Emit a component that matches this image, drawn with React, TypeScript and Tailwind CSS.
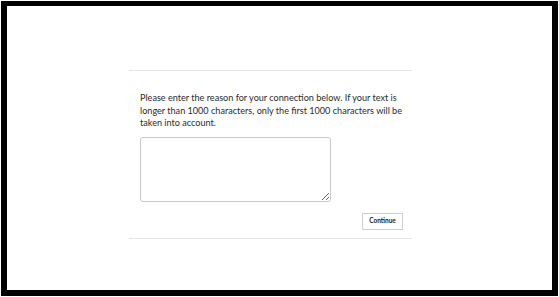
export default function App() {
  return (
    <div className="w-[559px] h-[297px] bg-white p-[1px] font-['Lato','Noto_Sans',sans-serif]">
      <div className="w-[557px] h-[295px] border-black border-l-[6px] border-t-[5px] border-r-[6px] border-b-[6px] bg-white">
        <div className="ml-[122px] mt-[64px] w-[283px] border-t border-[#e6e6e6]">
          <div className="pl-[11px] pr-[9px] pt-[21px] pb-[8px] border-b border-[#e6e6e6]">
            <p className="text-[9.1px] leading-[12.5px] text-[#2b2b2b] w-[266px]">
              Please enter the reason for your connection below. If your text is longer than 1000 characters, only the first 1000 characters will be taken into account.
            </p>
            <textarea className="block mt-[7px] w-[191px] h-[65px] border border-[#c9c9c9] rounded-[3px] bg-white outline-none" />
            <div className="flex justify-end mt-[11px]">
              <button className="w-[41px] h-[17px] border border-[#cfcfcf] bg-white text-[6.5px] font-bold text-[#222] leading-none">
                Continue
              </button>
            </div>
          </div>
        </div>
      </div>
    </div>
  );
}
